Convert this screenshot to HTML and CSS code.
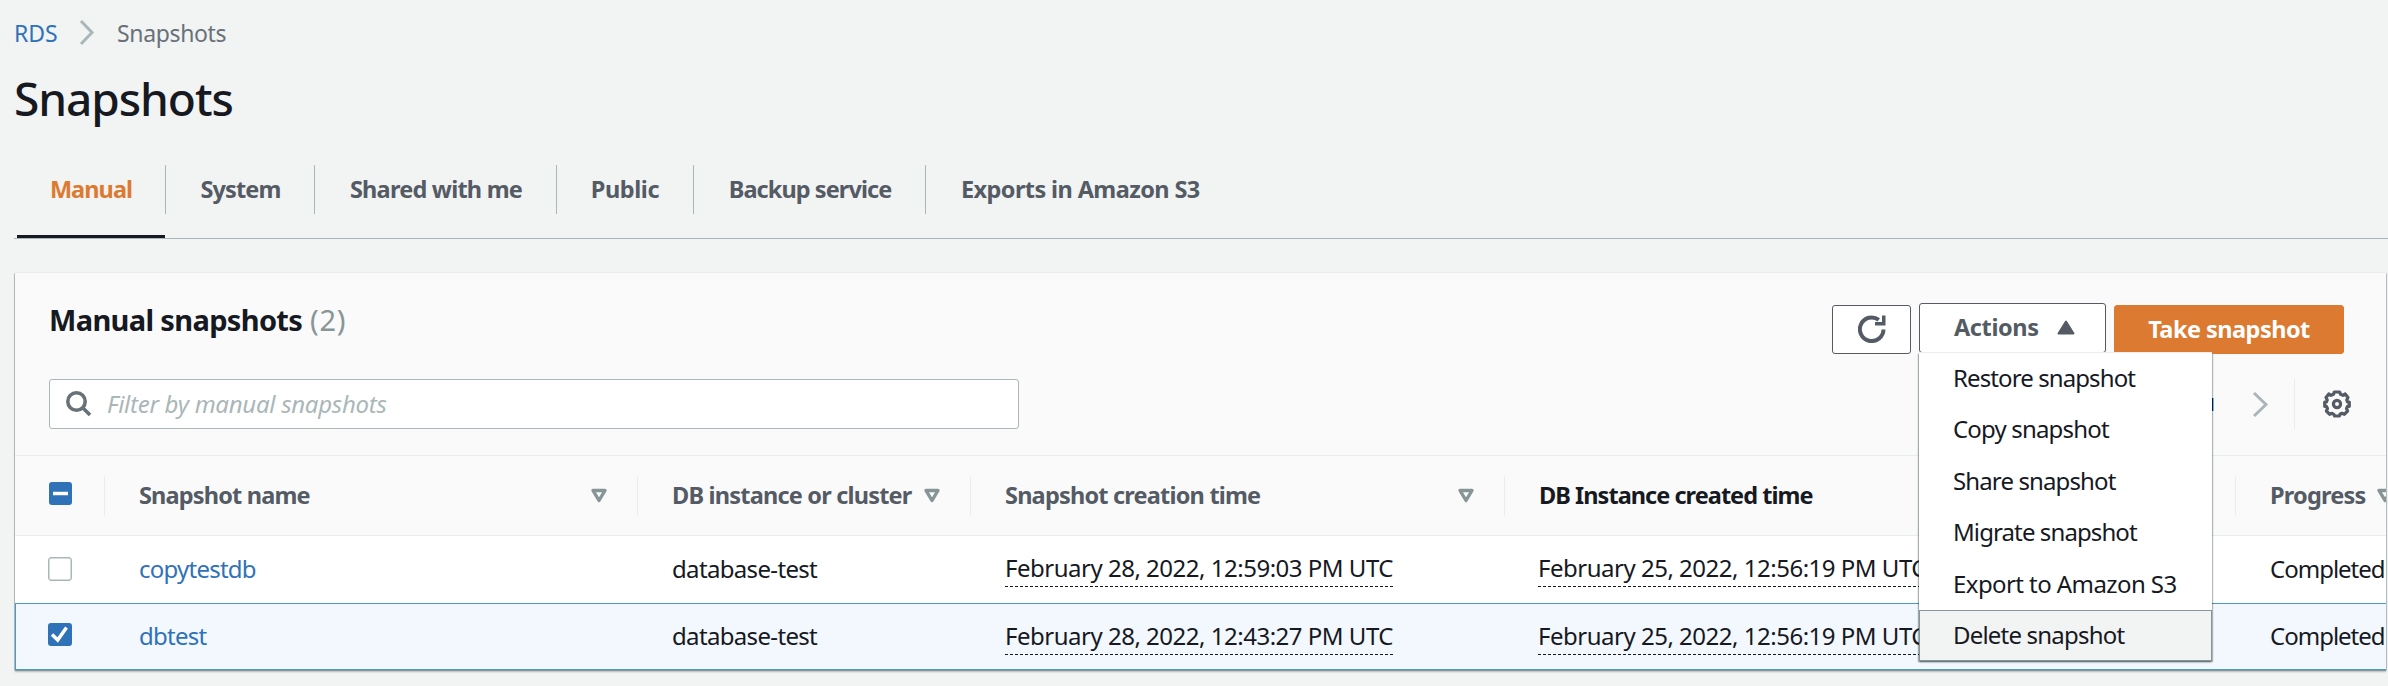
FILE: index.html
```
<!DOCTYPE html>
<html lang="en">
<head>
<meta charset="utf-8">
<title>Snapshots</title>
<link rel="stylesheet" href="styles.css">
</head>
<body>
<nav class="breadcrumb">
  <a class="crumb-link" href="#">RDS</a>
  <svg class="crumb-arrow" width="16" height="27" viewBox="0 0 16 27"><path d="M2 2 13 13.5 2 25"/></svg>
  <span class="crumb-here">Snapshots</span>
</nav>
<h1 class="page-title">Snapshots</h1>
<nav class="tabs">
  <a class="tab tab-manual active"><span>Manual</span></a>
  <a class="tab tab-system"><span>System</span></a>
  <a class="tab tab-shared"><span>Shared with me</span></a>
  <a class="tab tab-public"><span>Public</span></a>
  <a class="tab tab-backup"><span>Backup service</span></a>
  <a class="tab tab-exports"><span>Exports in Amazon S3</span></a>
</nav>

<main class="card">
  <header class="card-head">
    <div class="head-row">
      <h2 class="card-title">Manual snapshots <span class="count">(2)</span></h2>
      <div class="buttons">
        <button class="btn btn-refresh" aria-label="Refresh">
          <svg width="28" height="28" viewBox="0 0 28 28"><path class="refresh-arc" d="M25.5 14.5A11.8 11.8 0 1 1 20.8 4.8"/><path class="refresh-head" d="M24 .5h3.5v10H17V7h7z"/></svg>
        </button>
        <div class="dropdown">
          <button class="btn btn-actions">Actions
            <svg width="18" height="15" viewBox="0 0 18 15"><path d="M9 1.5 16.5 13.500H1.500Z"/></svg>
          </button>
          <ul class="menu">
            <li class="m-restore">Restore snapshot</li>
            <li class="m-copy">Copy snapshot</li>
            <li class="m-share">Share snapshot</li>
            <li class="m-migrate">Migrate snapshot</li>
            <li class="m-export">Export to Amazon S3</li>
            <li class="m-delete hovered">Delete snapshot</li>
          </ul>
        </div>
        <button class="btn btn-primary">Take snapshot</button>
      </div>
    </div>
    <div class="filter-row">
      <label class="filter">
        <svg width="26" height="26" viewBox="0 0 26 26"><circle cx="10.500" cy="10.500" r="8.700"/><path d="M16.500 16.500 24 24"/></svg>
        <span class="placeholder">Filter by manual snapshots</span>
      </label>
      <div class="pager">
        <span class="page-no">1</span>
        <svg class="next" width="17" height="27" viewBox="0 0 17 27"><path d="M2 2 14 13.500 2 25"/></svg>
        <span class="rule"></span>
        <svg class="gear" width="28" height="28" viewBox="-14 -14 28 28">
          <path d="M-2.600-12H2.600L3.600-9.700 6-8.700 8.200-10 11-6.600 9.800-4 10.500-2H12.300V2.300H10.500L9.500 4.600 10.600 7 7.300 10.300 5 9.300 3 10.300 2.400 12H-2.400L-3.200 10.300-5 9.300-7.300 10.300-10.600 7-9.500 4.600-10.500 2.300H-12.300V-2H-10.500L-9.800-4-11-6.600-8.200-10-6-8.700-3.600-9.700Z"/>
          <circle r="3.600"/>
        </svg>
      </div>
    </div>
  </header>

  <div class="row thead">
    <div class="cell pick"><span class="box on"><svg width="23" height="23" viewBox="0 0 23 23"><path d="M4 11.500H19"/></svg></span></div>
    <div class="cell th"><span class="t-name">Snapshot name</span><svg class="sort" width="18" height="15" viewBox="0 0 18 15"><path d="M3 2.500H15L9 12.500Z"/></svg></div>
    <div class="cell th"><span class="t-inst">DB instance or cluster</span><svg class="sort" width="18" height="15" viewBox="0 0 18 15"><path d="M3 2.500H15L9 12.500Z"/></svg></div>
    <div class="cell th"><span class="t-inst">Snapshot creation time</span><svg class="sort" width="18" height="15" viewBox="0 0 18 15"><path d="M3 2.500H15L9 12.500Z"/></svg></div>
    <div class="cell th plain"><span class="t-created">DB Instance created time</span></div>
    <div class="cell th"><span class="t-prog">Progress</span><svg class="sort" width="18" height="15" viewBox="0 0 18 15"><path d="M3 2.500H15L9 12.500Z"/></svg></div>
  </div>
  <div class="row">
    <div class="cell pick"><span class="box"></span></div>
    <div class="cell"><a class="link" href="#">copytestdb</a></div>
    <div class="cell db">database-test</div>
    <div class="cell"><span class="date">February 28, 2022, 12:59:03 PM UTC</span></div>
    <div class="cell created"><span class="date">February 25, 2022, 12:56:19 PM UTC</span></div>
    <div class="cell done">Completed</div>
  </div>
  <div class="row selected">
    <div class="cell pick"><span class="box on"><svg width="23" height="23" viewBox="0 0 23 23"><path d="M4 11.500 9.700 17 18.500 4.500"/></svg></span></div>
    <div class="cell"><a class="link" href="#">dbtest</a></div>
    <div class="cell db">database-test</div>
    <div class="cell"><span class="date">February 28, 2022, 12:43:27 PM UTC</span></div>
    <div class="cell created"><span class="date">February 25, 2022, 12:56:19 PM UTC</span></div>
    <div class="cell done">Completed</div>
  </div>
</main>
</body>
</html>
```
FILE: styles.css
```
* { box-sizing: border-box; }
body {
  margin: 0;
  padding: 0 2px 0 15px;
  height: 686px;
  overflow: hidden;
  background: #f2f3f3;
  color: #16191f;
  font: 450 24px/50px "Noto Sans", "Open Sans", sans-serif;
}
h1, h2, ul { margin: 0; padding: 0; }
svg { display: block; flex: none; fill: none; }
a { text-decoration: none; }

.breadcrumb { display: flex; align-items: center; height: 65px; font-size: 23px; letter-spacing: -.35px; }
.crumb-link { width: 65px; margin-left: -1px; color: #2f72b8; letter-spacing: -.1px; }
.crumb-here { margin-left: 22px; color: #687078; }
.crumb-arrow path { stroke: #aab7b8; stroke-width: 3; }
.page-title { margin-left: -1px; height: 67px; line-height: 67px; font-size: 46px; font-weight: 500; letter-spacing: -1.05px; }

.tabs {
  display: flex;
  height: 107px;
  margin: 0 -2px 0 -1px;
  padding: 33px 0 0 3px;
  border-bottom: 1px solid #aab7b8;
  color: #545b64;
  font-size: 23.5px;
  font-weight: 700;
}
.tab { height: 73px; padding-right: 1px; }
.tab span { display: block; height: 49px; line-height: 48px; margin-right: -1px; border-right: 1px solid #aab7b8; text-align: center; }
.tab.active { color: #dd7a31; background: linear-gradient(#16191f, #16191f) 0 100% / 148px 3px no-repeat; }
.tab-manual { width: 149px; letter-spacing: -.95px; }
.tab-system { width: 149px; letter-spacing: -.85px; }
.tab-system span { padding-left: 1px; }
.tab-shared { width: 242px; letter-spacing: -.77px; }
.tab-shared span { padding-left: 1px; }
.tab-public { width: 137px; letter-spacing: -.4px; }
.tab-backup { width: 232px; letter-spacing: -.93px; }
.tab-backup span { padding-left: 1px; }
.tab-exports { letter-spacing: -.6px; }
.tab-exports span { padding-left: 35px; border: 0; }

.card {
  margin-top: 34px;
  background: #fff;
  box-shadow: 0 -1px 0 #eaeded, 0 1px 1px #879596, 0 2px 2px rgba(0,28,36,.2), 1px 0 0 #ccd1d2, -1px 0 0 #c4cacb;
}
.card-head { height: 183px; padding: 23px 0 0 34px; background: #fafafa; border-bottom: 1px solid #eaeded; }
.head-row { display: flex; justify-content: space-between; height: 83px; padding-right: 42px; }
.card-title { line-height: 48px; font-size: 29px; font-weight: 700; letter-spacing: -.66px; }
.count { margin-left: 1px; color: #879596; font-weight: 450; letter-spacing: .7px; }
.buttons { display: flex; align-items: flex-start; gap: 8px; padding-top: 9px; }
.btn {
  display: flex;
  align-items: center;
  height: 49px;
  padding: 0 0 1px;
  border: 1px solid #545b64;
  border-radius: 3px;
  background: #fff;
  color: #545b64;
  font: 700 23.5px/46px "Noto Sans", sans-serif;
}
.btn-refresh { width: 79px; justify-content: center; }
.refresh-arc { stroke: #545b64; stroke-width: 4; }
.refresh-head { fill: #545b64; }
.dropdown { position: relative; margin-top: -2px; }
.btn-actions { width: 187px; height: 50px; padding: 0 30px 2px 34px; justify-content: space-between; letter-spacing: -.4px; }
.btn-actions path { fill: #545b64; stroke: #545b64; stroke-width: 2; stroke-linejoin: round; }
.btn-primary { width: 230px; justify-content: center; border-color: #dd7a31; background: #dd7a31; color: #fff; letter-spacing: -.53px; }

.menu {
  position: absolute;
  z-index: 2;
  top: 50px;
  left: 0;
  width: 293px;
  list-style: none;
  background: #fff;
  box-shadow: 0 -1px 0 #eaeded, 0 1px 2px rgba(0,28,36,.4), 1px 1px 1px rgba(0,28,36,.2), -1px 1px 1px rgba(0,28,36,.25);
}
.menu li { height: 51.4px; padding-left: 34px; line-height: 49px; border: 0 solid #879596; white-space: nowrap; }
.menu .hovered { padding-left: 33px; line-height: 47px; border-width: 1px; background: #f2f3f3; }
.m-restore { letter-spacing: -.9px; }
.m-copy { letter-spacing: -.83px; }
.m-share { letter-spacing: -.88px; }
.m-migrate { letter-spacing: -.9px; }
.m-export { letter-spacing: -.58px; }
.m-delete { letter-spacing: -.8px; }

.filter-row { display: flex; justify-content: space-between; padding-right: 35px; }
.filter { display: flex; align-items: center; width: 970px; height: 50px; padding-left: 16px; gap: 15px; border: 1px solid #aab7b8; border-radius: 3px; background: #fff; }
.filter circle, .filter path { stroke: #687078; stroke-width: 3.6; }
.placeholder { color: #aab7b8; font-style: italic; line-height: 46px; padding-bottom: 1px; letter-spacing: -.28px; }
.pager { display: flex; align-items: center; height: 50px; }
.page-no { margin-right: 36px; font-size: 18px; font-weight: 700; line-height: 50px; }
.next path { stroke: #aab7b8; stroke-width: 3; }
.rule { width: 1px; height: 50px; margin: 0 28px 0 25px; background: #eaeded; }
.gear { stroke: #545b64; stroke-width: 3.2; stroke-linejoin: round; }

.row { display: grid; grid-template-columns: 90px 533px 333px 534px 731px 150px; height: 67px; overflow: hidden; }
.cell { display: flex; align-items: center; padding: 0 0 2px 34px; line-height: 64px; white-space: nowrap; min-width: 0; }
.created { padding-left: 33px; }
.thead { height: 80px; background: #fafafa; border-bottom: 1px solid #eaeded; }
.thead .pick { padding: 0 0 5px 34px; }
.thead .pick, .th:not(:last-child) { background: linear-gradient(#eaeded, #eaeded) 100% 50% / 1px 40px no-repeat; }
.th { justify-content: space-between; padding-right: 30px; color: #545b64; font-size: 23.5px; font-weight: 700; line-height: 76px; }
.th:last-child { padding-right: 0; justify-content: flex-start; gap: 10px; }
.plain { color: #16191f; }
.t-name { letter-spacing: -.83px; }
.t-inst { letter-spacing: -.8px; }
.t-created { letter-spacing: -.96px; }
.t-prog { letter-spacing: -.79px; }
.sort { margin-top: 1px; }
.sort path { stroke: #879596; stroke-width: 3.4; stroke-linejoin: round; }

.link { color: #2f72b8; letter-spacing: -.76px; }
.db { letter-spacing: -.66px; }
.done { letter-spacing: -1px; }
.date {
  height: 35px;
  margin-top: 2px;
  line-height: 32px;
  letter-spacing: -.49px;
  background: repeating-linear-gradient(90deg, #16191f 0 3px, transparent 3px 5px) 0 100% / 100% 1px no-repeat;
}
.pick { padding-left: 33px; }
.box { width: 24px; height: 24px; border: 1.500px solid #aab7b8; border-radius: 3px; background: #fff; box-shadow: inset 0 0 0 .5px #aab7b8; }
.box.on { height: 23px; border: 0; background: #2f72b8; box-shadow: none; }
.thead .box.on { width: 23px; }
.box path { stroke: #fff; stroke-width: 3.500; }
.selected { border: 1px solid #4a9cc4; border-right: 0; background: #f2f8fd; grid-template-columns: 89px 533px 333px 534px 731px 150px; }
.selected .pick { padding: 0 0 5px 32px; }
```
